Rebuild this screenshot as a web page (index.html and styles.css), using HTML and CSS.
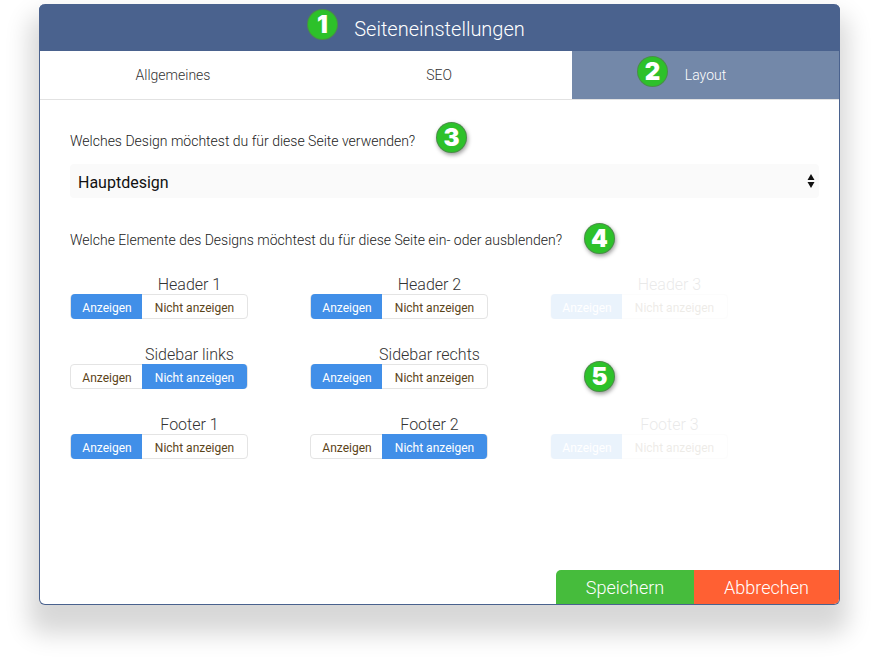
FILE: index.html
```html
<!DOCTYPE html>
<html lang="de">
<head>
  <meta charset="UTF-8" />
  <title>Seiteneinstellungen</title>
  <link rel="stylesheet" href="styles.css">
</head>
<body>
  <div class="modal">
    <div class="modal-title">Seiteneinstellungen</div>
    <div class="tabs">
      <div class="tab">Allgemeines</div>
      <div class="tab">SEO</div>
      <div class="tab active">Layout</div>
    </div>

    <div class="modal-body">
      <p class="question">Welches Design möchtest du für diese Seite verwenden?</p>
      <div class="select">
        <span class="select-value">Hauptdesign</span>
        <svg class="select-arrows" width="8" height="16" viewBox="0 0 8 16"><path d="M4 1 L7.5 7 H0.5 Z M0.5 9 H7.5 L4 15 Z" /></svg>
      </div>

      <p class="question second">Welche Elemente des Designs möchtest du für diese Seite ein- oder ausblenden?</p>

      <div class="elements">
        <div class="element">
          <div class="element-name">Header 1</div>
          <div class="toggle"><span class="on">Anzeigen</span><span>Nicht anzeigen</span></div>
        </div>
        <div class="element">
          <div class="element-name">Header 2</div>
          <div class="toggle"><span class="on">Anzeigen</span><span>Nicht anzeigen</span></div>
        </div>
        <div class="element disabled">
          <div class="element-name">Header 3</div>
          <div class="toggle"><span class="on">Anzeigen</span><span>Nicht anzeigen</span></div>
        </div>

        <div class="element">
          <div class="element-name">Sidebar links</div>
          <div class="toggle"><span>Anzeigen</span><span class="on">Nicht anzeigen</span></div>
        </div>
        <div class="element">
          <div class="element-name">Sidebar rechts</div>
          <div class="toggle"><span class="on">Anzeigen</span><span>Nicht anzeigen</span></div>
        </div>
        <div class="element empty"></div>

        <div class="element">
          <div class="element-name">Footer 1</div>
          <div class="toggle"><span class="on">Anzeigen</span><span>Nicht anzeigen</span></div>
        </div>
        <div class="element">
          <div class="element-name">Footer 2</div>
          <div class="toggle"><span>Anzeigen</span><span class="on">Nicht anzeigen</span></div>
        </div>
        <div class="element disabled">
          <div class="element-name">Footer 3</div>
          <div class="toggle"><span class="on">Anzeigen</span><span>Nicht anzeigen</span></div>
        </div>
      </div>
    </div>

    <div class="modal-footer">
      <button class="save">Speichern</button>
      <button class="cancel">Abbrechen</button>
    </div>

    <div class="badge b1">1</div>
    <div class="badge b2">2</div>
    <div class="badge b3">3</div>
    <div class="badge b4">4</div>
    <div class="badge b5">5</div>
  </div>
</body>
</html>
```

FILE: styles.css
```css
html, body {
  height: 100%;
}

body {
  margin: 0;
  padding: 4px 0 0 39px;
  box-sizing: border-box;
  background: white;
  font-family: Roboto, "Liberation Sans", sans-serif;
  overflow: hidden;
}

.modal {
  position: relative;
  box-sizing: border-box;
  width: 801px;
  height: 601px;
  display: flex;
  flex-direction: column;
  background: white;
  border: 1px solid #4a628e;
  border-top: none;
  border-radius: 6px;
  box-shadow: -1px 20px 24px 9px rgba(0, 0, 0, 0.155);
}

.modal-title {
  height: 47px;
  margin: 0 -1px;
  background: #4a628e;
  border-radius: 6px 6px 0 0;
  color: white;
  font-size: 20px;
  font-weight: 300;
  line-height: 51px;
  text-align: center;
}

.tabs {
  display: grid;
  grid-template-columns: 266px 266px 1fr;
  height: 49px;
  box-sizing: border-box;
  border-bottom: 1px solid #e2e2e2;
}

.tab {
  color: #333;
  font-size: 14px;
  font-weight: 300;
  line-height: 48px;
  text-align: center;
}

.tab.active {
  background: #7388a9;
  color: white;
}

.modal-body {
  flex: 1;
  padding: 0 20px 0 30px;
}

.question {
  margin: 33px 0 14px;
  color: #222;
  font-size: 14px;
  font-weight: 300;
  line-height: 17px;
}

.question.second {
  margin: 34px 0 26px;
}

.select {
  display: flex;
  justify-content: space-between;
  align-items: center;
  height: 34px;
  padding: 0 4px 0 8px;
  background: #fafafa;
  border-radius: 4px;
  color: #111;
  font-size: 16px;
}

.select-value {
  padding-top: 2px;
}

.select-arrows {
  fill: #111;
}

.elements {
  display: grid;
  grid-template-columns: repeat(3, 240px);
  grid-auto-rows: 70px;
}

.element-name {
  width: 239px;
  color: #333;
  font-size: 16px;
  font-weight: 300;
  line-height: 19px;
  text-align: center;
}

.element.disabled {
  opacity: 0.1;
}

.toggle {
  display: flex;
  width: 178px;
  height: 25px;
  box-sizing: border-box;
  border: 1px solid #e4e4e4;
  border-radius: 4px;
  color: #5c4419;
  font-size: 12px;
  line-height: 26px;
}

.toggle span {
  white-space: nowrap;
  text-align: center;
}

.toggle span:first-child {
  width: 70px;
  padding-left: 1px;
}

.toggle span:last-child {
  flex: 1;
}

.toggle .on {
  margin: -1px 0;
  padding-top: 1px;
  background: #418fe8;
  border-radius: 4px 0 0 4px;
  color: white;
}

.toggle .on:last-child {
  border-radius: 0 4px 4px 0;
}

.modal-footer {
  display: flex;
  justify-content: flex-end;
}

.modal-footer button {
  height: 34px;
  border: none;
  padding: 0;
  color: white;
  font-family: inherit;
  font-size: 18px;
  font-weight: 300;
}

.save {
  width: 138px;
  background: #46bc3c;
  border-radius: 5px 0 0 0;
}

.cancel {
  width: 145px;
  background: #ff6033;
  border-radius: 0 0 5px 0;
}

.badge {
  position: absolute;
  width: 31px;
  height: 31px;
  box-sizing: border-box;
  border: 1px solid rgba(90, 110, 90, 0.6);
  border-radius: 50%;
  background: #2dc12a;
  box-shadow: 1px 2px 4px rgba(0, 0, 0, 0.4);
  color: white;
  font-family: Inter, "Liberation Sans", sans-serif;
  font-size: 24px;
  font-weight: 900;
  line-height: 29px;
  text-align: center;
}

.b1 { left: 267px; top: 5px; box-shadow: none; }
.b2 { left: 597px; top: 52px; box-shadow: none; }
.b3 { left: 396px; top: 118px; }
.b4 { left: 544px; top: 219px; }
.b5 { left: 544px; top: 357px; }
```
